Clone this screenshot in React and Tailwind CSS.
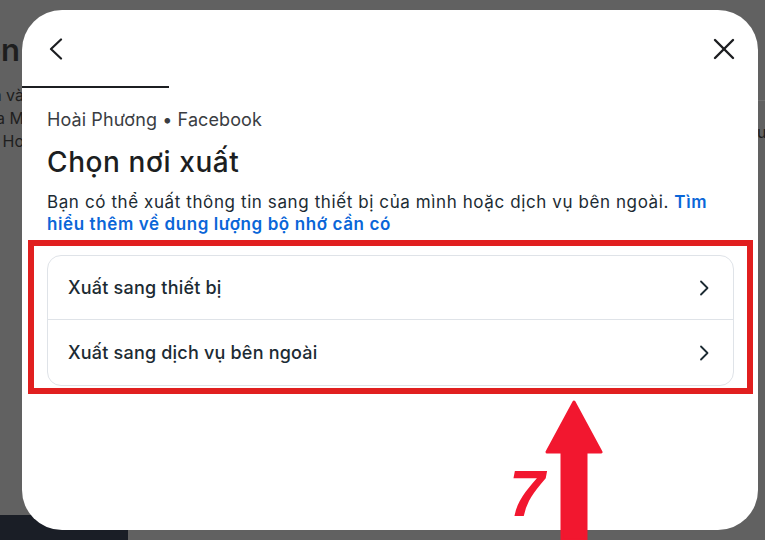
import React from 'react';

const font = { fontFamily: 'Inter, "Noto Sans", sans-serif' };

function BackIcon() {
  return (
    <svg width="16" height="22" viewBox="0 0 16 22" fill="none" stroke="#1c1e21" strokeWidth="2.2" strokeLinecap="round" strokeLinejoin="round">
      <polyline points="13,1.5 3,11 13,20.5" />
    </svg>
  );
}

function CloseIcon() {
  return (
    <svg width="22" height="22" viewBox="0 0 22 22" fill="none" stroke="#1c1e21" strokeWidth="2.4" strokeLinecap="round">
      <line x1="2" y1="2" x2="20" y2="20" />
      <line x1="20" y1="2" x2="2" y2="20" />
    </svg>
  );
}

function RowChevron() {
  return (
    <svg width="10" height="16" viewBox="0 0 10 16" fill="none" stroke="#1c2b33" strokeWidth="1.8" strokeLinecap="round" strokeLinejoin="round">
      <polyline points="2,1.5 8.5,8 2,14.5" />
    </svg>
  );
}

function OptionRow({ label, last }) {
  return (
    <div className={`flex items-center justify-between pl-5 pr-6 ${last ? 'h-[65px]' : 'h-[64px] border-b border-[#dfe3e8]'}`}>
      <span className="text-[18px] tracking-[0.2px] font-medium text-[#1c2b33]">{label}</span>
      <RowChevron />
    </div>
  );
}

export default function App() {
  return (
    <div className="relative w-[765px] h-[540px] overflow-hidden bg-[#616161]" style={font}>
      {/* dimmed page behind the dialog */}
      <div className="absolute left-0 top-0 w-[24px] flex flex-col items-end whitespace-nowrap text-[#1e1e1e]">
        <div className="mt-[32px] mr-[4px] text-[31px] font-semibold leading-[36px]">Chọn</div>
        <div className="mt-[16px] flex flex-col items-end text-[16px] leading-[23px]">
          <div>trên và</div>
          <div>tin a M</div>
          <div>Ho</div>
        </div>
      </div>
      <div className="absolute right-0 top-[100px] w-[20px] h-[1px] bg-[#707070]" />
      <div className="absolute left-[757px] top-[120px] text-[16px] text-[#1e1e1e]">u</div>
      <div className="absolute left-0 top-[515px] w-[128px] h-[25px] bg-[#1a1e26]" />

      {/* dialog */}
      <div className="absolute left-[22px] top-[10px] w-[736px] h-[520px] rounded-[40px] bg-white flex flex-col">
        <div className="flex items-center justify-between h-[76px] pl-[26px] pr-[23px] pt-[2px]">
          <BackIcon />
          <CloseIcon />
        </div>
        <div className="w-[147px] h-[2px] bg-[#1c1e21]" />

        <div className="pl-[25px] pr-[24px] flex flex-col">
          <div className="mt-[20px] text-[18px] tracking-[0.1px] leading-[24px] text-[#3a3d42]">Hoài Phương • Facebook</div>
          <h1 className="mt-[13px] text-[28px] tracking-[0.6px] leading-[34px] font-medium text-[#1c1e21]">Chọn nơi xuất</h1>
          <p className="mt-[12px] text-[17px] tracking-[0.6px] leading-[22px] text-[#1c2b33]">
            Bạn có thể xuất thông tin sang thiết bị của mình hoặc dịch vụ bên ngoài.{' '}
            <span className="font-semibold text-[#0a66d8]">Tìm hiểu thêm về dung lượng bộ nhớ cần có</span>
          </p>

          <div className="mt-[5px] -mx-[19px] border-[6px] border-[#e11f1f] pt-[9px] pb-[2px] px-[13px]">
            <div className="rounded-[14px] border border-[#dfe3e8] bg-white">
              <OptionRow label="Xuất sang thiết bị" />
              <OptionRow label="Xuất sang dịch vụ bên ngoài" last />
            </div>
          </div>
        </div>
      </div>

      {/* annotation */}
      <svg className="absolute left-[540px] top-[400px]" width="70" height="140" viewBox="0 0 70 140">
        <polygon points="34,2 61,52 46,52 46,140 22,140 22,52 7,52" fill="#f2172f" strokeLinejoin="round" stroke="#f2172f" strokeWidth="3" />
      </svg>
      <div
        className="absolute left-[509px] top-[460px] text-[64px] leading-[68px] font-black italic text-[#f2172f]"
        style={{ fontFamily: '"Liberation Sans", Arial, sans-serif' }}
      >
        7
      </div>
    </div>
  );
}
